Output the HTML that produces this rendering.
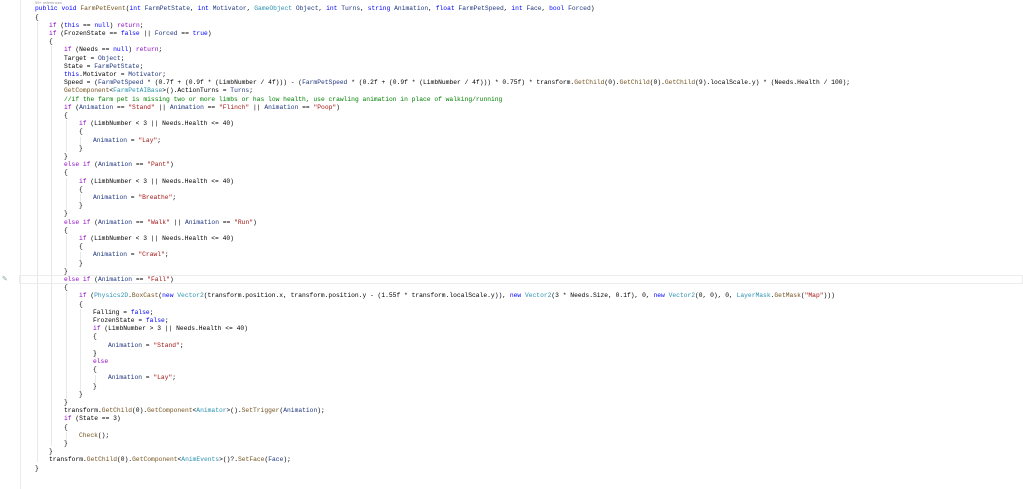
<!DOCTYPE html>
<html><head><meta charset="utf-8"><style>
body{margin:0;width:1023px;height:489px;background:#fff;overflow:hidden;position:relative;font-family:"Liberation Mono",monospace;}
.l{position:absolute;font-size:6.3px;line-height:8.2px;height:8.2px;white-space:pre;color:#000;}
.k{color:#0000ff}.c{color:#8f08c4}.t{color:#2b91af}.s{color:#a31515}.g{color:#008000}.m{color:#74531f}.p{color:#1f377f}
.gd{position:absolute;width:0;border-left:1px solid #e8e8e8;}
</style></head><body>
<div style="position:absolute;left:20px;top:0;width:1px;height:489px;background:#ececec"></div>
<div style="position:absolute;left:19px;top:275px;width:1004px;height:9px;border:1px solid #ececec;box-sizing:border-box"></div>
<div style="position:absolute;left:2px;top:276px;color:#8aa;font-size:7px;line-height:7px;font-family:'DejaVu Sans',sans-serif">✎</div>
<div class="gd" style="left:37px;top:22px;height:440px"></div>
<div class="gd" style="left:51px;top:46px;height:400px"></div>
<div class="gd" style="left:66px;top:120px;height:32px"></div>
<div class="gd" style="left:66px;top:178px;height:32px"></div>
<div class="gd" style="left:66px;top:235px;height:32px"></div>
<div class="gd" style="left:66px;top:292px;height:108px"></div>
<div class="gd" style="left:66px;top:432px;height:10px"></div>
<div class="gd" style="left:80px;top:137px;height:8px"></div>
<div class="gd" style="left:80px;top:194px;height:8px"></div>
<div class="gd" style="left:80px;top:252px;height:8px"></div>
<div class="gd" style="left:80px;top:309px;height:84px"></div>
<div class="gd" style="left:95px;top:350px;height:8px"></div>
<div class="gd" style="left:95px;top:375px;height:8px"></div>
<div class="l" style="left:35px;top:0px;font-size:4px;line-height:5px;color:#999;font-family:'Liberation Sans',sans-serif">99+ references</div>
<div class="l" style="left:35px;top:5.4px"><span class="k">public</span> <span class="k">void</span> <span class="m">FarmPetEvent</span>(<span class="k">int</span> <span class="p">FarmPetState</span>, <span class="k">int</span> <span class="p">Motivator</span>, <span class="t">GameObject</span> <span class="p">Object</span>, <span class="k">int</span> <span class="p">Turns</span>, <span class="k">string</span> <span class="p">Animation</span>, <span class="k">float</span> <span class="p">FarmPetSpeed</span>, <span class="k">int</span> <span class="p">Face</span>, <span class="k">bool</span> <span class="p">Forced</span>)</div>
<div class="l" style="left:35px;top:13.6px">{</div>
<div class="l" style="left:49px;top:21.8px"><span class="c">if</span> (<span class="k">this</span> == <span class="k">null</span>) <span class="c">return</span>;</div>
<div class="l" style="left:49px;top:30px"><span class="c">if</span> (FrozenState == <span class="k">false</span> || <span class="p">Forced</span> == <span class="k">true</span>)</div>
<div class="l" style="left:49px;top:38.2px">{</div>
<div class="l" style="left:64px;top:46.4px"><span class="c">if</span> (Needs == <span class="k">null</span>) <span class="c">return</span>;</div>
<div class="l" style="left:64px;top:54.6px">Target = <span class="p">Object</span>;</div>
<div class="l" style="left:64px;top:62.8px">State = <span class="p">FarmPetState</span>;</div>
<div class="l" style="left:64px;top:71px"><span class="k">this</span>.Motivator = <span class="p">Motivator</span>;</div>
<div class="l" style="left:64px;top:79.2px">Speed = (<span class="p">FarmPetSpeed</span> * (0.7f + (0.9f * (LimbNumber / 4f))) - (<span class="p">FarmPetSpeed</span> * (0.2f + (0.9f * (LimbNumber / 4f))) * 0.75f) * transform.<span class="m">GetChild</span>(0).<span class="m">GetChild</span>(0).<span class="m">GetChild</span>(9).localScale.y) * (Needs.Health / 100);</div>
<div class="l" style="left:64px;top:87.4px"><span class="m">GetComponent</span>&lt;<span class="t">FarmPetAIBase</span>&gt;().ActionTurns = <span class="p">Turns</span>;</div>
<div class="l g" style="left:64px;top:95.6px">//if the farm pet is missing two or more limbs or has low health, use crawling animation in place of walking/running</div>
<div class="l" style="left:64px;top:103.8px"><span class="c">if</span> (<span class="p">Animation</span> == <span class="s">"Stand"</span> || <span class="p">Animation</span> == <span class="s">"Flinch"</span> || <span class="p">Animation</span> == <span class="s">"Poop"</span>)</div>
<div class="l" style="left:64px;top:112px">{</div>
<div class="l" style="left:79px;top:120.2px"><span class="c">if</span> (LimbNumber &lt; 3 || Needs.Health &lt;= 40)</div>
<div class="l" style="left:79px;top:128.4px">{</div>
<div class="l" style="left:93px;top:136.6px"><span class="p">Animation</span> = <span class="s">"Lay"</span>;</div>
<div class="l" style="left:79px;top:144.8px">}</div>
<div class="l" style="left:64px;top:153px">}</div>
<div class="l" style="left:64px;top:161.2px"><span class="c">else</span> <span class="c">if</span> (<span class="p">Animation</span> == <span class="s">"Pant"</span>)</div>
<div class="l" style="left:64px;top:169.4px">{</div>
<div class="l" style="left:79px;top:177.6px"><span class="c">if</span> (LimbNumber &lt; 3 || Needs.Health &lt;= 40)</div>
<div class="l" style="left:79px;top:185.8px">{</div>
<div class="l" style="left:93px;top:194px"><span class="p">Animation</span> = <span class="s">"Breathe"</span>;</div>
<div class="l" style="left:79px;top:202.2px">}</div>
<div class="l" style="left:64px;top:210.4px">}</div>
<div class="l" style="left:64px;top:218.6px"><span class="c">else</span> <span class="c">if</span> (<span class="p">Animation</span> == <span class="s">"Walk"</span> || <span class="p">Animation</span> == <span class="s">"Run"</span>)</div>
<div class="l" style="left:64px;top:226.8px">{</div>
<div class="l" style="left:79px;top:235px"><span class="c">if</span> (LimbNumber &lt; 3 || Needs.Health &lt;= 40)</div>
<div class="l" style="left:79px;top:243.2px">{</div>
<div class="l" style="left:93px;top:251.4px"><span class="p">Animation</span> = <span class="s">"Crawl"</span>;</div>
<div class="l" style="left:79px;top:259.6px">}</div>
<div class="l" style="left:64px;top:267.8px">}</div>
<div class="l" style="left:64px;top:276px"><span class="c">else</span> <span class="c">if</span> (<span class="p">Animation</span> == <span class="s">"Fall"</span>)</div>
<div class="l" style="left:64px;top:284.2px">{</div>
<div class="l" style="left:79px;top:292.4px"><span class="c">if</span> (<span class="t">Physics2D</span>.<span class="m">BoxCast</span>(<span class="k">new</span> <span class="t">Vector2</span>(transform.position.x, transform.position.y - (1.55f * transform.localScale.y)), <span class="k">new</span> <span class="t">Vector2</span>(3 * Needs.Size, 0.1f), 0, <span class="k">new</span> <span class="t">Vector2</span>(0, 0), 0, <span class="t">LayerMask</span>.<span class="m">GetMask</span>(<span class="s">"Map"</span>)))</div>
<div class="l" style="left:79px;top:300.6px">{</div>
<div class="l" style="left:93px;top:308.8px">Falling = <span class="k">false</span>;</div>
<div class="l" style="left:93px;top:317px">FrozenState = <span class="k">false</span>;</div>
<div class="l" style="left:93px;top:325.2px"><span class="c">if</span> (LimbNumber &gt; 3 || Needs.Health &lt;= 40)</div>
<div class="l" style="left:93px;top:333.4px">{</div>
<div class="l" style="left:108px;top:341.6px"><span class="p">Animation</span> = <span class="s">"Stand"</span>;</div>
<div class="l" style="left:93px;top:349.8px">}</div>
<div class="l" style="left:93px;top:358px"><span class="c">else</span></div>
<div class="l" style="left:93px;top:366.2px">{</div>
<div class="l" style="left:108px;top:374.4px"><span class="p">Animation</span> = <span class="s">"Lay"</span>;</div>
<div class="l" style="left:93px;top:382.6px">}</div>
<div class="l" style="left:79px;top:390.8px">}</div>
<div class="l" style="left:64px;top:399px">}</div>
<div class="l" style="left:64px;top:407.2px">transform.<span class="m">GetChild</span>(0).<span class="m">GetComponent</span>&lt;<span class="t">Animator</span>&gt;().<span class="m">SetTrigger</span>(<span class="p">Animation</span>);</div>
<div class="l" style="left:64px;top:415.4px"><span class="c">if</span> (State == 3)</div>
<div class="l" style="left:64px;top:423.6px">{</div>
<div class="l" style="left:79px;top:431.8px"><span class="m">Check</span>();</div>
<div class="l" style="left:64px;top:440px">}</div>
<div class="l" style="left:49px;top:448.2px">}</div>
<div class="l" style="left:49px;top:456.4px">transform.<span class="m">GetChild</span>(0).<span class="m">GetComponent</span>&lt;<span class="t">AnimEvents</span>&gt;()?.<span class="m">SetFace</span>(<span class="p">Face</span>);</div>
<div class="l" style="left:35px;top:464.6px">}</div>
</body></html>
